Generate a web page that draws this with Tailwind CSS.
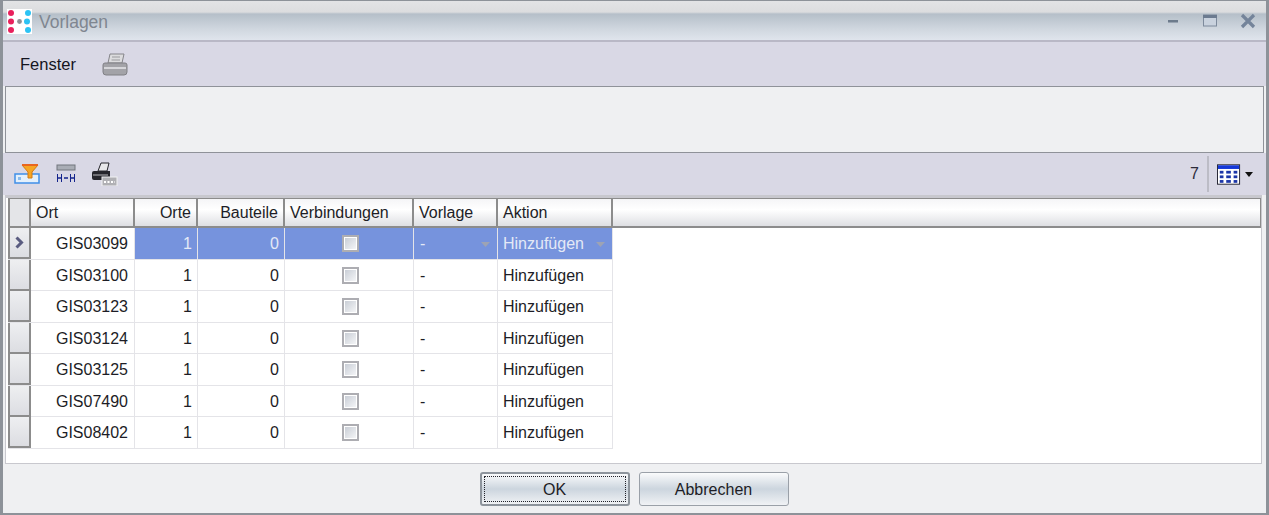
<!DOCTYPE html>
<html lang="de">
<head>
    <meta charset="UTF-8">
    <title>Vorlagen</title>
    <script src="https://cdn.jsdelivr.net/npm/@tailwindcss/browser@4"></script>
</head>
<body class="bg-[#eff0f2] overflow-hidden">
<div class="w-[1269px] h-[515px] flex flex-col border-x-[3px] border-t border-b-[2px] border-[#8d9299] font-['Liberation_Sans',sans-serif] text-[16px] text-[#1d1d26] bg-[#eff0f2]">

    <!-- Title bar -->
    <div class="h-[41px] flex items-center pl-[4px] pr-[10px] bg-[linear-gradient(#e2e3e5_0,#dcdddf_11px,#b5bfc9_13px,#d0d7df_28px,#e2e7ef_41px)] border-b-[2px] border-[#b9b8c6] shrink-0">
        <svg class="w-[25px] h-[25px] mt-[1px] bg-white" viewBox="0 0 25 25">
            <g fill="#e8205c"><circle cx="4" cy="4" r="3"/><circle cx="4" cy="12.5" r="3"/><circle cx="4" cy="21" r="3"/></g>
            <circle cx="12.5" cy="12.5" r="2.4" fill="#8f8f95"/>
            <g fill="#2cc3f4"><circle cx="21" cy="4" r="3"/><circle cx="20" cy="12.5" r="3"/><circle cx="21" cy="21" r="3"/></g>
        </svg>
        <span class="ml-[7px] mt-[3px] text-[17.5px] text-[#7f8690]">Vorlagen</span>
        <div class="ml-auto flex items-center">
            <svg class="w-[12px] h-[12px]" viewBox="0 0 12 12"><rect x="1" y="5" width="10" height="2.5" fill="#6d7b8c"/></svg>
            <svg class="w-[14px] h-[14px] ml-[24px]" viewBox="0 0 14 14"><rect x="0.5" y="1" width="13" height="11" fill="#c9d2de" stroke="#7d8a9c"/><rect x="0" y="1" width="14" height="3" fill="#6c7b90"/></svg>
            <svg class="w-[16px] h-[16px] ml-[23px]" viewBox="0 0 16 16"><path d="M2 2 L14 14 M14 2 L2 14" stroke="#74849a" stroke-width="3.2"/></svg>
        </div>
    </div>

    <!-- Menu toolbar -->
    <div class="h-[44px] flex items-center pl-[17px] bg-[#d9d8e5] shrink-0">
        <span class="text-[16.5px] text-[#14141e]">Fenster</span>
        <svg class="w-[26px] h-[24px] ml-[26px]" viewBox="0 0 26 24">
            <path d="M6 11 L8 2 H22 L20 11 Z" fill="#dcdcde" stroke="#85858a"/>
            <path d="M10 5 H18 M9.5 8 H18" stroke="#9a9a9e"/>
            <path d="M3 11 H23 Q25 11 25 13 V20 Q25 23 22 23 H4 Q1 23 1 20 V13 Q1 11 3 11 Z" fill="#a3a3a8" stroke="#808085"/>
            <path d="M2 16 H24" stroke="#d6d6da" stroke-width="2"/>
        </svg>
    </div>

    <!-- Empty panel -->
    <div class="h-[67px] mx-[2px] bg-[#eff0f2] border border-[#8f9299] shrink-0"></div>

    <!-- Grid toolbar -->
    <div class="h-[42px] flex items-center pl-[11px] pr-[13px] bg-[#d9d8e5] shrink-0">
        <svg class="w-[26px] h-[22px]" viewBox="0 0 26 22">
            <rect x="1" y="11" width="24" height="9" fill="#e4f0fb" stroke="#3f8ee8" stroke-width="1.5"/>
            <path d="M8 2 H24 L18 9 V15 H14 V9 Z" fill="#f6a623" stroke="#d67a12"/>
            <rect x="8" y="1" width="16" height="2" fill="#e9661f"/>
            <rect x="4" y="14" width="3" height="3" fill="#8cbcec"/>
        </svg>
        <svg class="w-[22px] h-[20px] ml-[15px]" viewBox="0 0 22 20">
            <rect x="2" y="1" width="18" height="5" fill="#a9adb5" stroke="#72767e"/>
            <path d="M2.5 10 V18 M19.5 10 V18 M6.5 10 V18 M15.5 10 V18" stroke="#14248c"/>
            <path d="M3 14 H6 M9 14 H13 M16 14 H19" stroke="#14248c" stroke-width="1.5"/>
        </svg>
        <svg class="w-[26px] h-[24px] ml-[15px]" viewBox="0 0 26 24">
            <path d="M6 9 L9 1 H17 L15 9 Z" fill="#e8e8ea" stroke="#26262c"/>
            <path d="M2 9 H18 V18 H2 Q0 18 0 16 V11 Q0 9 2 9 Z" fill="#26262c"/>
            <path d="M1 13 H16" stroke="#b8b8bc"/>
            <rect x="10" y="15" width="15" height="9" fill="#b0b0b4" stroke="#f2f2f4"/>
            <path d="M12 20 H23" stroke="#fff" stroke-width="2" stroke-dasharray="2 1.5"/>
        </svg>
        <span class="ml-auto text-[#2b2b3a]">7</span>
        <div class="w-[2px] h-[36px] ml-[8px] bg-[#bcbcc6]"></div>
        <svg class="w-[24px] h-[21px] ml-[8px]" viewBox="0 0 26 22">
            <rect x="0.5" y="0.5" width="24" height="21" fill="#fff" stroke="#1c1c2a"/>
            <rect x="1" y="1" width="23" height="4" fill="#1437d8"/>
            <g fill="#1c36a8">
                <rect x="3" y="7" width="4" height="3"/><rect x="10" y="7" width="5" height="3"/><rect x="18" y="7" width="4" height="3"/>
                <rect x="3" y="12" width="4" height="3"/><rect x="10" y="12" width="5" height="3"/><rect x="18" y="12" width="4" height="3"/>
                <rect x="3" y="17" width="4" height="3"/><rect x="10" y="17" width="5" height="3"/><rect x="18" y="17" width="4" height="3"/>
            </g>
        </svg>
        <svg class="w-[8px] h-[5px] ml-[4px]" viewBox="0 0 8 5"><path d="M0 0 H8 L4 5 Z" fill="#111"/></svg>
    </div>

    <!-- Grid -->
    <div class="h-[269px] ml-[2px] mr-[4px] pl-[2px] bg-white border-t-[3px] border-x border-b border-[#c8c8ce] flex flex-col shrink-0">
        <div class="grid grid-cols-[23px_104px_63px_87px_129px_84px_115px_1fr] h-[30px] border-b-2 border-t border-[#8c8c8c] bg-[linear-gradient(#f5f5f7,#ffffff_40%,#dedfe3)] shrink-0">
            <div class="border-x-2 border-[#8c8c8c] bg-[#e4e5e8]"></div>
            <div class="border-r-2 border-[#8c8c8c] pl-[5px] leading-[27px]">Ort</div>
            <div class="border-r-2 border-[#8c8c8c] pr-[5px] leading-[27px] text-right">Orte</div>
            <div class="border-r-2 border-[#8c8c8c] pr-[5px] leading-[27px] text-right">Bauteile</div>
            <div class="border-r-2 border-[#8c8c8c] pl-[5px] leading-[27px]">Verbindungen</div>
            <div class="border-r-2 border-[#8c8c8c] pl-[5px] leading-[27px]">Vorlage</div>
            <div class="border-r-2 border-[#8c8c8c] pl-[5px] leading-[27px]">Aktion</div>
            <div class="border-r border-[#8c8c8c]"></div>
        </div>
        <div id="rows"></div>
    </div>

    <!-- Footer buttons -->
    <div class="flex-1 flex items-start justify-center gap-[9px] pt-[8px] pr-[1px] bg-[#eff0f2]">
        <button class="w-[150px] h-[34px] rounded-[3px] border-2 border-[#8d949c] p-[2px] bg-[linear-gradient(#fafbfc,#ccd5de_50%,#f0f2f5)]">
            <span class="flex items-center justify-center h-full pt-[1px] border border-dotted border-[#22222a]">OK</span>
        </button>
        <button class="w-[150px] h-[34px] pt-[1px] rounded-[3px] border border-[#9aa0a8] bg-[linear-gradient(#fafbfc,#ccd5de_50%,#f0f2f5)]">Abbrechen</button>
    </div>
</div>

<script>
    const orte = ['GIS03099', 'GIS03100', 'GIS03123', 'GIS03124', 'GIS03125', 'GIS07490', 'GIS08402'];
    const box = '<span class="w-[17px] h-[17px] border-2 border-[#adadb2] p-[1px] bg-white block"><span class="block w-full h-full bg-[linear-gradient(135deg,#c9ced6,#f4f5f7)]"></span></span>';
    const arrow = '<svg class="w-[9px] h-[5px] absolute right-[7px] top-[14px]" viewBox="0 0 9 5"><path d="M0 0 H9 L4.5 5 Z" fill="#9da3b4"/></svg>';

    document.getElementById('rows').innerHTML = orte.map((ort, i) => {
        const sel = i === 0;
        const cell = sel ? 'relative border-r border-[#e4e4e8] bg-[#7693dd] text-[#e4e9f6]' : 'relative border-r border-[#e4e4e8]';
        return `
        <div class="grid grid-cols-[23px_104px_63px_87px_129px_84px_115px] w-fit h-[31.5px] leading-[31px] border-b border-[#e4e4e8]">
            <div class="flex items-center justify-center border-x-2 border-b-2 border-[#8c8c8c] bg-[linear-gradient(#eeeff1,#dcdde2)]">
                ${sel ? '<svg class="w-[9px] h-[13px]" viewBox="0 0 9 13"><path d="M1.5 1.5 L6.5 6.5 L1.5 11.5" fill="none" stroke="#5a5c80" stroke-width="3"/></svg>' : ''}
            </div>
            <div class="relative border-r border-[#e4e4e8] pr-[6px] text-right">${ort}</div>
            <div class="${cell} pr-[5px] text-right">1</div>
            <div class="${cell} pr-[5px] text-right">0</div>
            <div class="${cell} flex items-center justify-center pl-[2px]">${box}</div>
            <div class="${cell} pl-[6px]">-${sel ? arrow : ''}</div>
            <div class="${cell} pl-[5px]">Hinzufügen${sel ? arrow : ''}</div>
        </div>`;
    }).join('');
</script>
</body>
</html>
